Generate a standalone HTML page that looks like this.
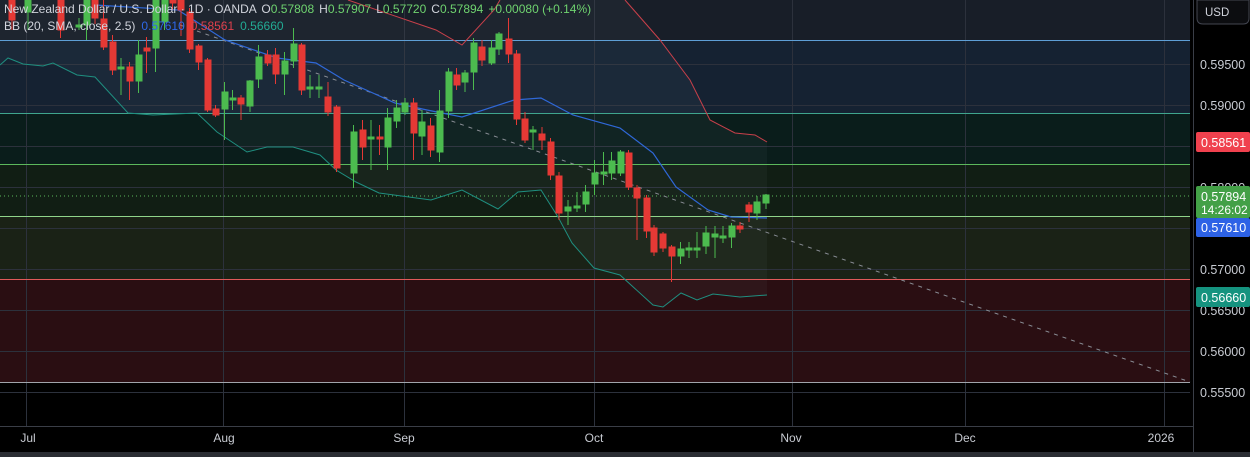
<!DOCTYPE html>
<html><head><meta charset="utf-8"><style>
html,body{margin:0;padding:0;background:#000;width:1250px;height:457px;overflow:hidden}
svg{display:block;font-family:"Liberation Sans",sans-serif}
</style></head><body>
<svg width="1250" height="457" viewBox="0 0 1250 457" xmlns="http://www.w3.org/2000/svg">
<rect width="1250" height="457" fill="#000"/>
<rect x="0" y="0" width="1190" height="40" fill="#181e28"/>
<rect x="0" y="40" width="1190" height="73" fill="#152232"/>
<rect x="0" y="113" width="1190" height="51" fill="#0a1d1b"/>
<rect x="0" y="164" width="1190" height="52" fill="#111e14"/>
<rect x="0" y="216" width="1190" height="63" fill="#1a2216"/>
<rect x="0" y="279" width="1190" height="103" fill="#2a0e12"/>
<g stroke="#2c313c" stroke-width="1">
<line x1="0" y1="64.5" x2="1190" y2="64.5"/><line x1="0" y1="105.5" x2="1190" y2="105.5"/>
<line x1="0" y1="146.5" x2="1190" y2="146.5"/><line x1="0" y1="187.5" x2="1190" y2="187.5"/>
<line x1="0" y1="228.5" x2="1190" y2="228.5"/><line x1="0" y1="269.5" x2="1190" y2="269.5"/>
<line x1="0" y1="310.5" x2="1190" y2="310.5"/><line x1="0" y1="351.5" x2="1190" y2="351.5"/>
<line x1="0" y1="392.5" x2="1190" y2="392.5"/>
<line x1="26.5" y1="0" x2="26.5" y2="427"/><line x1="223.5" y1="0" x2="223.5" y2="427"/>
<line x1="404.5" y1="0" x2="404.5" y2="427"/><line x1="594.5" y1="0" x2="594.5" y2="427"/>
<line x1="792.5" y1="0" x2="792.5" y2="427"/><line x1="965.5" y1="0" x2="965.5" y2="427"/>
<line x1="1164.5" y1="0" x2="1164.5" y2="427"/>
</g>
<path d="M348,0 L436,30 L462,45 L494,10 L500,0 L625,0 L660,40 L690,80 L710,120 L735,133 L755,135 L767,142 L767,295 L740,297 L713,294 L697,300 L681,293 L663,307 L653,305 L620,275 L594,268 L572,243 L558,217 L541,190 L518,192 L498,209 L462,190 L431,200 L379,193 L356,182 L336,170 L320,155 L293,147 L267,147 L247,152 L217,132 L197,113 L153,115 L128,113 L95,77 L77,75 L53,63 L43,66 L23,64 L8,58 L0,65 L0,0 Z" fill="rgba(130,150,170,0.06)"/>
<line x1="0" y1="40.5" x2="1190" y2="40.5" stroke="#5e9fd6"/>
<line x1="0" y1="113.5" x2="1190" y2="113.5" stroke="#3fa58e"/>
<line x1="0" y1="164.5" x2="1190" y2="164.5" stroke="#5cb85c"/>
<line x1="0" y1="196" x2="1190" y2="196" stroke="#5cb85c" stroke-dasharray="1,3"/>
<line x1="0" y1="216.5" x2="1190" y2="216.5" stroke="#8fd48a"/>
<line x1="0" y1="279.5" x2="1190" y2="279.5" stroke="#e05a5a"/>
<line x1="0" y1="382.5" x2="1190" y2="382.5" stroke="#a0a4ab"/>
<line x1="180" y1="25" x2="1190" y2="382" stroke="#8a8e96" stroke-dasharray="4,5"/>
<path d="M348,0 L436,30 L462,45 L494,10 L500,0 M625,0 L660,40 L690,80 L710,120 L735,133 L755,135 L767,142" fill="none" stroke="#c8404a" stroke-width="1"/>
<path d="M95,5 L178,10 L225,40 L277,58 L316,63 L344,80 L395,103 L427,110 L462,117 L514,100 L541,98 L573,115 L620,128 L653,153 L676,187 L708,210 L731,217 L767,218" fill="none" stroke="#2f68d8" stroke-width="1.2"/>
<path d="M0,65 L8,58 L23,64 L43,66 L53,63 L77,75 L95,77 L128,113 L153,115 L197,113 L217,132 L247,152 L267,147 L293,147 L320,155 L336,170 L356,182 L379,193 L431,200 L462,190 L498,209 L518,192 L541,190 L558,217 L572,243 L594,268 L620,275 L653,305 L663,307 L681,293 L697,300 L713,294 L740,297 L767,295" fill="none" stroke="#1f8f80" stroke-width="1"/>
<g stroke-width="1">
<g stroke="#e53935" fill="#e53935">
<line x1="12" y1="0" x2="12" y2="30"/><rect x="9" y="0" width="6" height="20"/>
<line x1="60.5" y1="0" x2="60.5" y2="38"/><rect x="58" y="0" width="6" height="30"/>
<line x1="95" y1="0" x2="95" y2="24"/><rect x="92" y="0" width="6" height="18"/>
<line x1="103.5" y1="0" x2="103.5" y2="50"/><rect x="101" y="19" width="6" height="28"/>
<line x1="112.5" y1="35" x2="112.5" y2="75"/><rect x="110" y="42" width="6" height="28"/>
<line x1="129.5" y1="62" x2="129.5" y2="100"/><rect x="127" y="67" width="6" height="14"/>
<line x1="146.5" y1="37" x2="146.5" y2="73"/><rect x="144" y="48" width="6" height="3"/>
<line x1="172.5" y1="0" x2="172.5" y2="10"/><rect x="170" y="0" width="6" height="3"/>
<line x1="181" y1="0" x2="181" y2="36"/><rect x="178" y="0" width="6" height="10"/>
<line x1="189.5" y1="8" x2="189.5" y2="53"/><rect x="187" y="12" width="6" height="37"/>
<line x1="198.5" y1="44" x2="198.5" y2="70"/><rect x="196" y="46" width="6" height="16"/>
<line x1="207.5" y1="58" x2="207.5" y2="112"/><rect x="205" y="60" width="6" height="50"/>
<line x1="215.5" y1="105" x2="215.5" y2="117"/><rect x="213" y="109" width="6" height="6"/>
<line x1="241" y1="95" x2="241" y2="120"/><rect x="238" y="98" width="6" height="6"/>
<line x1="267.5" y1="50" x2="267.5" y2="66"/><rect x="265" y="55" width="6" height="8"/>
<line x1="275.5" y1="48" x2="275.5" y2="84"/><rect x="273" y="55" width="6" height="19"/>
<line x1="301.5" y1="43" x2="301.5" y2="95"/><rect x="299" y="45" width="6" height="45"/>
<line x1="328" y1="82" x2="328" y2="116"/><rect x="325" y="97" width="6" height="15"/>
<line x1="336.5" y1="105" x2="336.5" y2="172"/><rect x="334" y="107" width="6" height="61"/>
<line x1="362.5" y1="120" x2="362.5" y2="160"/><rect x="360" y="130" width="6" height="17"/>
<line x1="379.5" y1="125" x2="379.5" y2="155"/><rect x="377" y="137" width="6" height="2"/>
<line x1="413.5" y1="98" x2="413.5" y2="160"/><rect x="411" y="103" width="6" height="30"/>
<line x1="430.5" y1="118" x2="430.5" y2="157"/><rect x="428" y="126" width="6" height="24"/>
<line x1="456.5" y1="68" x2="456.5" y2="90"/><rect x="454" y="75" width="6" height="10"/>
<line x1="482" y1="40" x2="482" y2="66"/><rect x="479" y="47" width="6" height="13"/>
<line x1="508.5" y1="18" x2="508.5" y2="63"/><rect x="506" y="39" width="6" height="15"/>
<line x1="516.5" y1="50" x2="516.5" y2="125"/><rect x="514" y="54" width="6" height="65"/>
<line x1="525" y1="112" x2="525" y2="143"/><rect x="522" y="119" width="6" height="21"/>
<line x1="542" y1="127" x2="542" y2="150"/><rect x="539" y="134" width="6" height="6"/>
<line x1="550.5" y1="138" x2="550.5" y2="180"/><rect x="548" y="142" width="6" height="33"/>
<line x1="559" y1="172" x2="559" y2="220"/><rect x="556" y="176" width="6" height="37"/>
<line x1="628.5" y1="150" x2="628.5" y2="190"/><rect x="626" y="153" width="6" height="34"/>
<line x1="637" y1="185" x2="637" y2="240"/><rect x="634" y="188" width="6" height="10"/>
<line x1="646.5" y1="195" x2="646.5" y2="238"/><rect x="644" y="198" width="6" height="33"/>
<line x1="654" y1="225" x2="654" y2="256"/><rect x="651" y="228" width="6" height="24"/>
<line x1="663" y1="232" x2="663" y2="252"/><rect x="660" y="234" width="6" height="14"/>
<line x1="671.5" y1="245" x2="671.5" y2="282"/><rect x="669" y="247" width="6" height="9"/>
<line x1="740" y1="222" x2="740" y2="233"/><rect x="737" y="226" width="6" height="3"/>
<line x1="749" y1="202" x2="749" y2="222"/><rect x="746" y="205" width="6" height="7"/>
</g>
<g stroke="#4cbb4f" fill="#4cbb4f">
<line x1="28" y1="0" x2="28" y2="30"/><rect x="25" y="0" width="6" height="12"/>
<line x1="79" y1="18" x2="79" y2="30"/><rect x="76" y="25" width="6" height="2"/>
<line x1="86.5" y1="0" x2="86.5" y2="40"/><rect x="84" y="0" width="6" height="25"/>
<line x1="121" y1="58" x2="121" y2="95"/><rect x="118" y="67" width="6" height="2"/>
<line x1="138.5" y1="40" x2="138.5" y2="93"/><rect x="136" y="55" width="6" height="26"/>
<line x1="155.5" y1="0" x2="155.5" y2="72"/><rect x="153" y="0" width="6" height="48"/>
<line x1="164.5" y1="0" x2="164.5" y2="30"/><rect x="162" y="0" width="6" height="22"/>
<line x1="224.5" y1="82" x2="224.5" y2="140"/><rect x="222" y="92" width="6" height="17"/>
<line x1="232.5" y1="90" x2="232.5" y2="110"/><rect x="230" y="98" width="6" height="2"/>
<line x1="250" y1="80" x2="250" y2="112"/><rect x="247" y="81" width="6" height="25"/>
<line x1="258.5" y1="45" x2="258.5" y2="88"/><rect x="256" y="57" width="6" height="22"/>
<line x1="284.5" y1="52" x2="284.5" y2="95"/><rect x="282" y="61" width="6" height="13"/>
<line x1="293.5" y1="28" x2="293.5" y2="68"/><rect x="291" y="44" width="6" height="17"/>
<line x1="310" y1="75" x2="310" y2="98"/><rect x="307" y="87" width="6" height="2"/>
<line x1="319" y1="75" x2="319" y2="98"/><rect x="316" y="87" width="6" height="2"/>
<line x1="353.5" y1="125" x2="353.5" y2="188"/><rect x="351" y="132" width="6" height="41"/>
<line x1="371" y1="120" x2="371" y2="170"/><rect x="368" y="137" width="6" height="2"/>
<line x1="387.5" y1="108" x2="387.5" y2="170"/><rect x="385" y="118" width="6" height="29"/>
<line x1="396.5" y1="100" x2="396.5" y2="128"/><rect x="394" y="108" width="6" height="13"/>
<line x1="405" y1="98" x2="405" y2="115"/><rect x="402" y="103" width="6" height="9"/>
<line x1="422" y1="110" x2="422" y2="155"/><rect x="419" y="122" width="6" height="14"/>
<line x1="439.5" y1="90" x2="439.5" y2="162"/><rect x="437" y="111" width="6" height="41"/>
<line x1="448.5" y1="68" x2="448.5" y2="118"/><rect x="446" y="72" width="6" height="39"/>
<line x1="465" y1="70" x2="465" y2="92"/><rect x="462" y="73" width="6" height="9"/>
<line x1="473.5" y1="38" x2="473.5" y2="90"/><rect x="471" y="43" width="6" height="29"/>
<line x1="491.5" y1="40" x2="491.5" y2="65"/><rect x="489" y="48" width="6" height="15"/>
<line x1="499" y1="32" x2="499" y2="55"/><rect x="496" y="34" width="6" height="15"/>
<line x1="533" y1="126" x2="533" y2="150"/><rect x="530" y="130" width="6" height="2"/>
<line x1="568" y1="200" x2="568" y2="225"/><rect x="565" y="207" width="6" height="4"/>
<line x1="577" y1="192" x2="577" y2="212"/><rect x="574" y="206" width="6" height="2"/>
<line x1="585.5" y1="185" x2="585.5" y2="212"/><rect x="583" y="192" width="6" height="12"/>
<line x1="594.5" y1="160" x2="594.5" y2="195"/><rect x="592" y="173" width="6" height="11"/>
<line x1="603.5" y1="152" x2="603.5" y2="185"/><rect x="601" y="172" width="6" height="2"/>
<line x1="611.5" y1="152" x2="611.5" y2="180"/><rect x="609" y="161" width="6" height="12"/>
<line x1="620.5" y1="150" x2="620.5" y2="176"/><rect x="618" y="152" width="6" height="21"/>
<line x1="680.5" y1="242" x2="680.5" y2="264"/><rect x="678" y="249" width="6" height="7"/>
<line x1="689" y1="242" x2="689" y2="258"/><rect x="686" y="248" width="6" height="2"/>
<line x1="697" y1="232" x2="697" y2="258"/><rect x="694" y="248" width="6" height="2"/>
<line x1="706" y1="226" x2="706" y2="254"/><rect x="703" y="233" width="6" height="13"/>
<line x1="715" y1="226" x2="715" y2="258"/><rect x="712" y="234" width="6" height="3"/>
<line x1="723" y1="226" x2="723" y2="243"/><rect x="720" y="236" width="6" height="2"/>
<line x1="731.5" y1="223" x2="731.5" y2="248"/><rect x="729" y="226" width="6" height="11"/>
<line x1="757" y1="196" x2="757" y2="220"/><rect x="754" y="202" width="6" height="11"/>
<line x1="766" y1="194" x2="766" y2="209"/><rect x="763" y="195" width="6" height="8"/>
</g>
</g>
<g font-size="12">
<text x="4" y="13" fill="#d1d4dc">New Zealand Dollar / U.S. Dollar · 1D · OANDA <tspan dx="2">O</tspan><tspan fill="#6fd36f">0.57808</tspan><tspan dx="5">H</tspan><tspan fill="#6fd36f">0.57907</tspan><tspan dx="5">L</tspan><tspan fill="#6fd36f">0.57720</tspan><tspan dx="5">C</tspan><tspan fill="#6fd36f">0.57894</tspan><tspan dx="5" fill="#6fd36f">+0.00080 (+0.14%)</tspan></text>
<text x="4" y="30" fill="#d1d4dc">BB (20, SMA, close, 2.5)<tspan dx="6" fill="#2f68e8">0.57610</tspan><tspan dx="6" fill="#e0404c">0.58561</tspan><tspan dx="6" fill="#22ab94">0.56660</tspan></text>
</g>
<rect x="1193" y="0" width="57" height="452" fill="#000"/>
<line x1="1193.5" y1="0" x2="1193.5" y2="452" stroke="#3a3e47"/>
<path d="M1197,0 H1249 V18 Q1249,24 1243,24 H1203 Q1197,24 1197,18 Z" fill="#0c0d10" stroke="#434651"/>
<text x="1205" y="16" font-size="11.5" fill="#d1d4dc">USD</text>
<g font-size="12.5" fill="#c8cbd2">
<text x="1200" y="69">0.59500</text>
<text x="1200" y="110">0.59000</text>
<text x="1200" y="192">0.58000</text>
<text x="1200" y="274">0.57000</text>
<text x="1200" y="315">0.56500</text>
<text x="1200" y="356">0.56000</text>
<text x="1200" y="397">0.55500</text>
</g>
<rect x="1196" y="132" width="54" height="20" rx="2" fill="#f0414e"/>
<text x="1201" y="147" font-size="12.5" fill="#fff">0.58561</text>
<rect x="1196" y="186" width="54" height="32" rx="2" fill="#43a047"/>
<text x="1201" y="201" font-size="12.5" fill="#fff">0.57894</text>
<text x="1201" y="214" font-size="12" fill="#fff">14:26:02</text>
<rect x="1196" y="218" width="54" height="19" rx="2" fill="#2d62e6"/>
<text x="1201" y="232" font-size="12.5" fill="#fff">0.57610</text>
<rect x="1196" y="287" width="54" height="20" rx="2" fill="#15937f"/>
<text x="1201" y="302" font-size="12.5" fill="#fff">0.56660</text>
<rect x="0" y="427" width="1193" height="25" fill="#000"/>
<line x1="0" y1="426.5" x2="1193" y2="426.5" stroke="#3a3e47"/>
<g font-size="12" fill="#c8cbd2" text-anchor="middle">
<text x="28" y="442">Jul</text><text x="224" y="442">Aug</text><text x="404" y="442">Sep</text>
<text x="594" y="442">Oct</text><text x="791" y="442">Nov</text><text x="965" y="442">Dec</text>
<text x="1161" y="442">2026</text>
</g>
<rect x="0" y="452" width="1250" height="5" fill="#2a2d33"/>
</svg>
</body></html>
